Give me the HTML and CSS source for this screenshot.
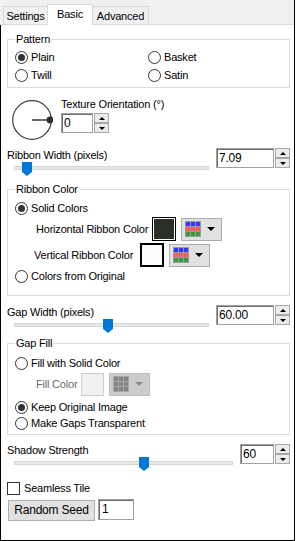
FILE: index.html
```html
<!DOCTYPE html>
<html lang="en">

<head>
    <meta charset="UTF-8">
    <title>Weave</title>
    <link rel="stylesheet" href="styles.css">
</head>

<body>

    <div class="window">
        <div class="tabs">
            <div class="tab tab-settings">Settings</div>
            <div class="tab tab-basic active">Basic</div>
            <div class="tab tab-advanced">Advanced</div>
        </div>

        <div class="panel">
            <fieldset class="group group-pattern">
                <legend>Pattern</legend>
                <div class="pattern-grid">
                    <div class="opt"><span class="radio on"></span>Plain</div>
                    <div class="opt"><span class="radio"></span>Basket</div>
                    <div class="opt"><span class="radio"></span>Twill</div>
                    <div class="opt"><span class="radio"></span>Satin</div>
                </div>
            </fieldset>

            <div class="orientation">
                <svg class="dial" width="42" height="42">
                    <circle cx="21" cy="21" r="19.3" fill="none" stroke="#3c3c3c" stroke-width="1.2"></circle>
                    <line x1="21" y1="21" x2="38" y2="21" stroke="#6a6a6a" stroke-width="2"></line>
                    <circle cx="39" cy="21" r="3.4" fill="#2e2e2e"></circle>
                </svg>
                <div class="orientation-field">
                    <div class="field-label">Texture Orientation (°)</div>
                    <div class="spin spin-small">
                        <span class="spin-value">0</span>
                        <span class="spin-buttons"><span class="spin-up"></span><span class="spin-down"></span></span>
                    </div>
                </div>
            </div>

            <div class="slider-row">
                <div class="slider-col">
                    <div class="field-label">Ribbon Width (pixels)</div>
                    <div class="slider">
                        <div class="track"></div>
                        <svg class="thumb" style="left:8px" width="10" height="14">
                            <polygon points="0,0 10,0 10,10 5,14 0,10" fill="#0078d7"></polygon>
                        </svg>
                    </div>
                </div>
                <div class="spin spin-wide">
                    <span class="spin-value">7.09</span>
                    <span class="spin-buttons"><span class="spin-up"></span><span class="spin-down"></span></span>
                </div>
            </div>

            <fieldset class="group group-ribbon">
                <legend>Ribbon Color</legend>
                <div class="opt"><span class="radio on"></span>Solid Colors</div>
                <div class="color-row">
                    <span class="field-label label-h">Horizontal Ribbon Color</span>
                    <span class="swatch swatch-dark"></span>
                    <span class="palette">
                        <svg class="palette-icon" width="16" height="16">
                            <rect width="16" height="16" fill="#9a9a9a"></rect>
                            <rect x="1" y="1" width="4" height="4" fill="#3535ff"></rect>
                            <rect x="6" y="1" width="4" height="4" fill="#3535ff"></rect>
                            <rect x="11" y="1" width="4" height="4" fill="#3535ff"></rect>
                            <rect x="1" y="6" width="4" height="4" fill="#ff5a5a"></rect>
                            <rect x="6" y="6" width="4" height="4" fill="#ff5a5a"></rect>
                            <rect x="11" y="6" width="4" height="4" fill="#ff5a5a"></rect>
                            <rect x="1" y="11" width="4" height="4" fill="#3a9a3a"></rect>
                            <rect x="6" y="11" width="4" height="4" fill="#3a9a3a"></rect>
                            <rect x="11" y="11" width="4" height="4" fill="#3a9a3a"></rect>
                        </svg>
                        <span class="drop-arrow"></span>
                    </span>
                </div>
                <div class="color-row color-row-v">
                    <span class="field-label label-v">Vertical Ribbon Color</span>
                    <span class="swatch swatch-light"></span>
                    <span class="palette">
                        <svg class="palette-icon" width="16" height="16">
                            <rect width="16" height="16" fill="#9a9a9a"></rect>
                            <rect x="1" y="1" width="4" height="4" fill="#3535ff"></rect>
                            <rect x="6" y="1" width="4" height="4" fill="#3535ff"></rect>
                            <rect x="11" y="1" width="4" height="4" fill="#3535ff"></rect>
                            <rect x="1" y="6" width="4" height="4" fill="#ff5a5a"></rect>
                            <rect x="6" y="6" width="4" height="4" fill="#ff5a5a"></rect>
                            <rect x="11" y="6" width="4" height="4" fill="#ff5a5a"></rect>
                            <rect x="1" y="11" width="4" height="4" fill="#3a9a3a"></rect>
                            <rect x="6" y="11" width="4" height="4" fill="#3a9a3a"></rect>
                            <rect x="11" y="11" width="4" height="4" fill="#3a9a3a"></rect>
                        </svg>
                        <span class="drop-arrow"></span>
                    </span>
                </div>
                <div class="opt"><span class="radio"></span>Colors from Original</div>
            </fieldset>

            <div class="slider-row slider-row-gap">
                <div class="slider-col">
                    <div class="field-label">Gap Width (pixels)</div>
                    <div class="slider">
                        <div class="track"></div>
                        <svg class="thumb" style="left:89px" width="10" height="14">
                            <polygon points="0,0 10,0 10,10 5,14 0,10" fill="#0078d7"></polygon>
                        </svg>
                    </div>
                </div>
                <div class="spin spin-wide">
                    <span class="spin-value">60.00</span>
                    <span class="spin-buttons"><span class="spin-up"></span><span class="spin-down"></span></span>
                </div>
            </div>

            <fieldset class="group group-gap">
                <legend>Gap Fill</legend>
                <div class="opt"><span class="radio"></span>Fill with Solid Color</div>
                <div class="color-row">
                    <span class="field-label label-fill">Fill Color</span>
                    <span class="swatch swatch-off"></span>
                    <span class="palette palette-off">
                        <svg class="palette-icon" width="16" height="16">
                            <rect width="16" height="16" fill="#a8a8a8"></rect>
                            <rect x="1" y="1" width="4" height="4" fill="#858585"></rect>
                            <rect x="6" y="1" width="4" height="4" fill="#858585"></rect>
                            <rect x="11" y="1" width="4" height="4" fill="#858585"></rect>
                            <rect x="1" y="6" width="4" height="4" fill="#858585"></rect>
                            <rect x="6" y="6" width="4" height="4" fill="#858585"></rect>
                            <rect x="11" y="6" width="4" height="4" fill="#858585"></rect>
                            <rect x="1" y="11" width="4" height="4" fill="#858585"></rect>
                            <rect x="6" y="11" width="4" height="4" fill="#858585"></rect>
                            <rect x="11" y="11" width="4" height="4" fill="#858585"></rect>
                        </svg>
                        <span class="drop-arrow"></span>
                    </span>
                </div>
                <div class="opt opt-tight opt-first"><span class="radio on"></span>Keep Original Image</div>
                <div class="opt opt-tight"><span class="radio"></span>Make Gaps Transparent</div>
            </fieldset>

            <div class="slider-row slider-row-shadow">
                <div class="slider-col slider-col-long">
                    <div class="field-label">Shadow Strength</div>
                    <div class="slider">
                        <div class="track"></div>
                        <svg class="thumb" style="left:125px" width="10" height="14">
                            <polygon points="0,0 10,0 10,10 5,14 0,10" fill="#0078d7"></polygon>
                        </svg>
                    </div>
                </div>
                <div class="spin spin-mid">
                    <span class="spin-value">60</span>
                    <span class="spin-buttons"><span class="spin-up"></span><span class="spin-down"></span></span>
                </div>
            </div>

            <div class="check-row"><span class="checkbox"></span>Seamless Tile</div>

            <div class="seed-row">
                <span class="button">Random Seed</span>
                <span class="seed-value">1</span>
            </div>
        </div>
    </div>

</body>

</html>
```

FILE: styles.css
```css
* {
    box-sizing: border-box;
}

body {
    margin: 0;
    background: #fff;
    font-family: "Liberation Sans", Arial, sans-serif;
    font-size: 11px;
    letter-spacing: -0.2px;
    color: #000;
}

.window {
    width: 295px;
    height: 541px;
    border-right: 1px solid #000;
    display: flex;
    flex-direction: column;
}

/* tab strip */
.tabs {
    flex: none;
    height: 25px;
    background: #f0f0f0;
    border-bottom: 1px solid #d9d9d9;
    display: flex;
    align-items: flex-end;
    padding-left: 3px;
}

.tab {
    height: 18px;
    padding-top: 1px;
    border: 1px solid #d9d9d9;
    border-bottom: none;
    background: #f0f0f0;
    line-height: 16px;
    text-align: center;
}

.tab.active {
    height: 21px;
    padding-top: 0;
    margin-bottom: -1px;
    line-height: 18px;
    background: #fff;
}

.tab-settings {
    width: 44px;
    border-right: none;
}

.tab-basic {
    width: 46px;
}

.tab-advanced {
    width: 56px;
    border-left: none;
}

/* page body */
.panel {
    flex: 1;
    border-left: 1px solid #000;
    border-bottom: 1px solid #000;
    padding: 7px 4px 0 6px;
}

.group {
    margin: 0;
    min-width: 0;
    border: 1px solid #dcdcdc;
    padding: 2px 4px 3px 7px;
}

.group legend {
    padding: 0 1px;
    line-height: 14px;
}

.group-ribbon {
    margin-top: 6px;
    padding-top: 3px;
    padding-bottom: 10px;
}

.group-gap {
    margin-top: 3px;
    padding-top: 4px;
}

.field-label {
    line-height: 14px;
    white-space: nowrap;
}

.pattern-grid {
    display: grid;
    grid-template-columns: 133px 1fr;
}

.opt {
    display: flex;
    align-items: center;
    height: 18px;
}

.opt-tight {
    height: 16px;
}

.opt-first {
    margin-top: 3px;
}

.radio {
    width: 13px;
    height: 13px;
    margin-right: 3px;
    border: 1px solid #333;
    border-radius: 50%;
    background: #fff;
    display: flex;
    align-items: center;
    justify-content: center;
}

.radio.on::after {
    content: "";
    width: 7px;
    height: 7px;
    border-radius: 50%;
    background: #333;
}

/* orientation */
.orientation {
    display: flex;
    margin-top: 9px;
}

.dial {
    margin: 2px 8px 0 4px;
}

.orientation-field .spin {
    margin-top: 2px;
}

/* spin boxes */
.spin {
    display: flex;
    height: 20px;
}

.spin-value {
    height: 100%;
    padding: 0 2px;
    border: 1px solid #a0a0a0;
    box-shadow: inset 1px 1px 0 #6d6d6d;
    background: #fff;
    line-height: 18px;
    font-size: 12px;
}

.spin-small .spin-value {
    width: 32px;
}

.spin-wide .spin-value {
    width: 58px;
}

.spin-mid .spin-value {
    width: 34px;
}

.spin-buttons {
    width: 15px;
    margin-left: 1px;
    display: flex;
    flex-direction: column;
}

.spin-up,
.spin-down {
    flex: 1;
    border: 1px solid #a8a8a8;
    background: #ececec;
    display: flex;
    align-items: center;
    justify-content: center;
}

.spin-up::after {
    content: "";
    border-left: 3px solid transparent;
    border-right: 3px solid transparent;
    border-bottom: 3px solid #000;
}

.spin-down::after {
    content: "";
    border-left: 3px solid transparent;
    border-right: 3px solid transparent;
    border-top: 3px solid #000;
}

/* sliders */
.slider-row {
    display: flex;
    justify-content: space-between;
    align-items: flex-start;
    margin-top: 7px;
}

.slider-row-gap {
    margin-top: 9px;
}

.slider-row-shadow {
    margin-top: 8px;
}

.slider-row-shadow .spin {
    margin-top: 1px;
}

.slider-col {
    width: 202px;
}

.slider-col-long {
    width: 226px;
}

.slider {
    position: relative;
    height: 14px;
    padding-top: 4px;
    margin-left: 7px;
}

.track {
    height: 4px;
    border: 1px solid #d6d6d6;
    background: #e7e7e7;
}

.thumb {
    position: absolute;
    top: 0;
}

/* colour pickers */
.color-row {
    display: flex;
    align-items: center;
    height: 24px;
}

.color-row-v {
    margin-top: 2px;
}

.label-h {
    width: 137px;
    padding-left: 21px;
}

.label-v {
    width: 125px;
    padding-left: 19px;
}

.label-fill {
    width: 66px;
    padding-left: 21px;
    color: #6d6d6d;
}

.swatch {
    width: 24px;
    height: 24px;
}

.swatch-dark {
    border: 1px solid #000;
    box-shadow: inset 0 0 0 1px #fff;
    background: #2b3026;
}

.swatch-light {
    border: 2px solid #000;
    background: #fffcfc;
}

.swatch-off {
    width: 23px;
    height: 23px;
    border: 1px solid #cfcfcf;
    background: #f0f0f0;
}

.palette {
    width: 41px;
    height: 23px;
    margin-left: 5px;
    padding-left: 3px;
    border: 1px solid #adadad;
    background: #e1e1e1;
    display: flex;
    align-items: center;
}

.palette-off {
    border-color: #bfbfbf;
    background: #cccccc;
}

.drop-arrow {
    margin-left: 6px;
    border-left: 4px solid transparent;
    border-right: 4px solid transparent;
    border-top: 4px solid #000;
}

.palette-off .drop-arrow {
    border-top-color: #8a8a8a;
}

/* bottom */
.check-row {
    display: flex;
    align-items: center;
    height: 16px;
    margin-top: 9px;
}

.checkbox {
    width: 13px;
    height: 13px;
    margin-right: 4px;
    border: 1px solid #333;
    background: #fff;
}

.seed-row {
    display: flex;
    align-items: flex-start;
    margin-top: 3px;
}

.button {
    width: 87px;
    height: 21px;
    margin: 1px 0 0 1px;
    border: 1px solid #adadad;
    background: #e1e1e1;
    line-height: 19px;
    text-align: center;
    font-size: 12px;
}

.seed-value {
    width: 36px;
    height: 21px;
    margin-left: 3px;
    padding: 0 3px;
    border: 1px solid #a0a0a0;
    box-shadow: inset 1px 1px 0 #6d6d6d;
    line-height: 19px;
    font-size: 12px;
}
```
